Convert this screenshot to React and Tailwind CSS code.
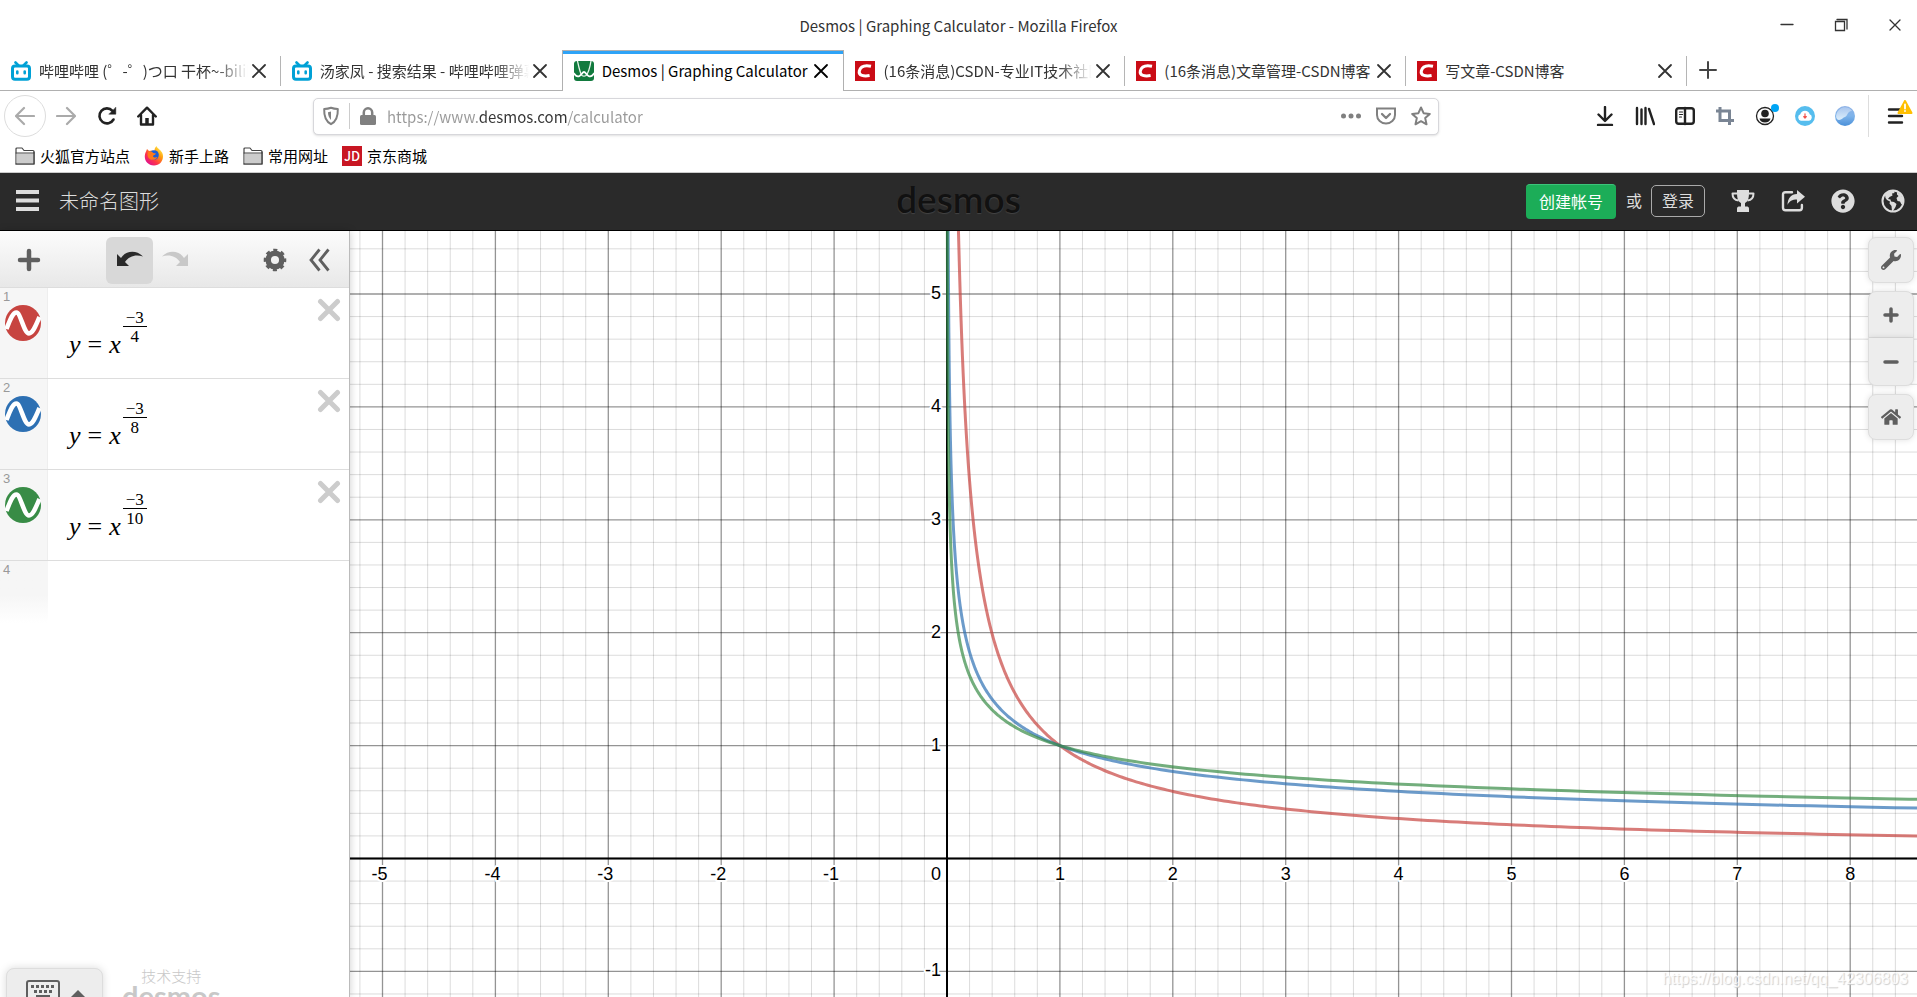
import { useState } from "react";
import { FaWrench, FaHome, FaQuestionCircle } from "react-icons/fa";

const X_PATH = "M4 4l12 12M16 4L4 16";

function Icon({ box = 20, className = "size-5", children, ...rest }) {
  return (
    <svg
      viewBox={`0 0 ${box} ${box}`}
      className={`shrink-0 ${className}`}
      fill="none"
      stroke="currentColor"
      strokeWidth="2"
      strokeLinecap="round"
      strokeLinejoin="round"
      aria-hidden="true"
      {...rest}
    >
      {children}
    </svg>
  );
}

function BiliIcon() {
  return (
    <Icon className="size-5 text-[#00a1d6]">
      <path d="M4.500 1.500l3 3M15.500 1.500l-3 3" strokeWidth="2.600" />
      <rect x="1.500" y="5" width="17" height="13.300" rx="2.500" strokeWidth="3" />
      <path d="M6.300 10.500v1.800M13.700 10.500v1.800" strokeWidth="2.600" />
    </Icon>
  );
}

function CsdnIcon() {
  return (
    <Icon className="size-5">
      <rect width="20" height="20" fill="#ca0c16" stroke="none" />
      <path d="M16 5.300C10 4 5.600 5.400 4.300 10c-1 4.600 4.500 5.600 10.300 4.600" stroke="#fff" strokeWidth="3" strokeLinecap="butt" />
    </Icon>
  );
}

function DesmosIcon() {
  return (
    <Icon className="size-5">
      <rect width="20" height="20" rx="3" fill="#127a3e" stroke="none" />
      <path d="M3.500 0C5 7 6 12.500 8 14.500c1.500 1 2.500 1 4 0C14.500 12 16 6 17 0" stroke="#e8f5ec" strokeWidth="1.300" />
      <path d="M0 12.500c1.500 2.500 3.500 3.500 5.500 2.500s3-4 4.500-4 2.500 3 4.500 4 4 0 5.500-2.500" stroke="#fff" strokeWidth="1.800" />
    </Icon>
  );
}

function FolderIcon() {
  return (
    <Icon className="size-5">
      <path d="M1 18V3q0-1 1-1h5l2 2.500h9q1 0 1 1V18z" fill="#fff" stroke="#444" strokeWidth="1.200" />
      <path d="M1.600 7.500h16.800v10H1.600z" fill="#ccc" stroke="none" />
      <path d="M1 7h18" stroke="#444" strokeWidth="1" />
      <path d="M1 18h18V6" stroke="#444" strokeWidth="1.200" />
    </Icon>
  );
}

function FirefoxIcon() {
  return (
    <Icon className="size-5">
      <defs>
        <linearGradient id="fox" x1="0.9" y1="0.1" x2="0.2" y2="0.9">
          <stop offset="0" stopColor="#fff44f" />
          <stop offset="0.350" stopColor="#ff980e" />
          <stop offset="0.700" stopColor="#ff3647" />
          <stop offset="1" stopColor="#e31587" />
        </linearGradient>
      </defs>
      <path d="M3 3l2 2c2-1 4-.5 5.500 0C10.500 3 11 1.500 12.500 0c.5 2.500 5 4 6.200 8C20.200 14 16 19.500 10 19.500S.5 15 .8 10C1 7 2 6 3 3z" fill="url(#fox)" stroke="none" />
      <circle cx="10" cy="9" r="4.800" fill="#1b5fd9" stroke="none" />
      <path d="M4 6c2-1.500 4.500-.5 5 1l3 .5c-.5 1.500-3 1.500-3 3 1 1.500 3 1 4.500.5-1.500 3.500-7.500 4-9.500 0-.7-2-.5-3.500 0-5z" fill="#ff7a1a" stroke="none" />
    </Icon>
  );
}

const TABS = [
  { title: "哔哩哔哩 (゜-゜)つ口 干杯~-bilibili", icon: BiliIcon, fade: true },
  { title: "汤家凤 - 搜索结果 - 哔哩哔哩弹幕视频网", icon: BiliIcon, fade: true },
  { title: "Desmos | Graphing Calculator", icon: DesmosIcon, active: true },
  { title: "(16条消息)CSDN-专业IT技术社区", icon: CsdnIcon, fade: true },
  { title: "(16条消息)文章管理-CSDN博客", icon: CsdnIcon },
  { title: "写文章-CSDN博客", icon: CsdnIcon },
];

function Tab({ tab, beforeActive }) {
  const TabIcon = tab.icon;
  return (
    <div
      className={`relative flex h-[41px] min-w-0 flex-1 items-center pl-[11px] pr-3 ${
        tab.active
          ? "border-x border-t border-[#b0b0b0] bg-white text-black"
          : "border-b border-[#b0b0b0] pt-px text-[#333]"
      }`}
    >
      {tab.active && <span className="absolute inset-x-0 top-0 h-[3px] bg-[#2ea3f7]" />}
      {!tab.active && !beforeActive && (
        <span className="absolute right-0 top-[6px] h-[30px] w-px bg-[#b5b5b5]" />
      )}
      <TabIcon />
      <span
        className={`ml-2 min-w-0 flex-1 overflow-hidden whitespace-nowrap text-[15px] leading-6 ${
          tab.fade ? "[mask-image:linear-gradient(to_left,transparent,#000_34px)]" : ""
        }`}
      >
        {tab.title}
      </span>
      <button type="button" aria-label="关闭标签页" className="ml-px flex size-5 items-center justify-center">
        <Icon className="size-5" strokeWidth="1.800">
          <path d={X_PATH} />
        </Icon>
      </button>
    </div>
  );
}

function TitleBar() {
  return (
    <div className="relative flex h-[50px] items-center justify-end pr-3 text-[#333]">
      <span className="absolute inset-x-0 top-[14px] text-center text-[15px] leading-6">
        Desmos | Graphing Calculator - Mozilla Firefox
      </span>
      <div className="relative flex gap-[34px]">
        <button type="button" aria-label="最小化">
          <Icon strokeWidth="1.300"><path d="M4 9.500h12" /></Icon>
        </button>
        <button type="button" aria-label="还原">
          <Icon strokeWidth="1.300" strokeLinejoin="miter">
            <path d="M4.500 6.500h9v9h-9zM6 4.500h10V14" />
          </Icon>
        </button>
        <button type="button" aria-label="关闭">
          <Icon strokeWidth="1.300"><path d="M5 5l10 10M15 5L5 15" /></Icon>
        </button>
      </div>
    </div>
  );
}

function NavBar() {
  const [url, setUrl] = useState("https://www.desmos.com/calculator");
  return (
    <div className="flex h-[50px] items-center pl-1 text-[#222]">
      <button type="button" aria-label="后退" className="flex size-[42px] items-center justify-center rounded-full border border-[#ddd] text-[#aaa]">
        <Icon strokeWidth="2.200"><path d="M1 10h18M9 2l-8 8 8 8" /></Icon>
      </button>
      <button type="button" aria-label="前进" className="flex w-10 justify-center text-[#aaa]">
        <Icon strokeWidth="2.200"><path d="M1 10h18M11 2l8 8-8 8" /></Icon>
      </button>
      <button type="button" aria-label="刷新" className="flex w-[42px] justify-center">
        <Icon strokeWidth="2.600">
          <path d="M16.500 13.500A7.500 7.500 0 1 1 15.500 4.800" />
          <path d="M18.800 1.500v6.700h-6.700z" fill="currentColor" strokeWidth="0.500" />
        </Icon>
      </button>
      <button type="button" aria-label="主页" className="flex w-[38px] justify-center">
        <Icon strokeWidth="2.400">
          <path d="M1.200 10.500L10 1.700l8.800 8.800M4 9v9.500h12V9" />
          <path d="M10 18v-6" strokeWidth="3.500" strokeLinecap="butt" />
        </Icon>
      </button>

      <div className="ml-[147px] flex h-[37px] min-w-0 flex-1 items-center rounded-[5px] border border-[#d7d7db] bg-white pl-[7px] pr-[7px] text-[#808080] shadow-sm">
        <Icon>
          <path d="M10 1.800c2.500 1 4.500 1.200 6.800 1.200.3 7-1.800 12.500-6.800 15.200C5 15.500 2.900 10 3.200 3 5.500 3 7.500 2.800 10 1.800z" />
          <path d="M10 5.500v8.500C8 12 7 9.500 7 6.300z" fill="currentColor" stroke="none" />
        </Icon>
        <span className="mx-[8px] h-[26px] w-px bg-[#ccc]" />
        <Icon>
          <rect x="2" y="9" width="16" height="10" rx="1.500" fill="currentColor" stroke="none" />
          <path d="M5.800 10V6.500a4.200 4.200 0 0 1 8.400 0V10" strokeWidth="2.500" />
        </Icon>
        <input
          type="text"
          aria-label="网址"
          value={url}
          onChange={(e) => setUrl(e.target.value)}
          className="ml-[9px] min-w-0 flex-1 bg-[linear-gradient(to_right,#999_91px,#333_91px,#333_181px,#999_181px)] bg-clip-text pt-[2px] text-[15px] leading-6 text-transparent outline-none"
        />
        <div className="flex gap-[15px]">
          <button type="button" aria-label="页面操作">
            <Icon fill="currentColor" stroke="none">
              <circle cx="2.500" cy="10" r="2.500" />
              <circle cx="10" cy="10" r="2.500" />
              <circle cx="17.500" cy="10" r="2.500" />
            </Icon>
          </button>
          <button type="button" aria-label="Pocket">
            <Icon>
              <path d="M1 2.500h18V9a9 8.500 0 0 1-18 0z" strokeLinejoin="miter" />
              <path d="M6 8l4 4 4-4" strokeWidth="2.300" />
            </Icon>
          </button>
          <button type="button" aria-label="收藏">
            <Icon>
              <path d="M10 1.500l2.600 5.700 6.200.7-4.600 4.200 1.300 6.200-5.500-3.100-5.500 3.100 1.300-6.200L1.200 7.900l6.200-.7z" />
            </Icon>
          </button>
        </div>
      </div>

      <div className="ml-[156px] flex gap-5">
        <button type="button" aria-label="下载">
          <Icon strokeWidth="2.400"><path d="M10 1v13M3.500 8.500L10 15l6.500-6.500M3 19h14" /></Icon>
        </button>
        <button type="button" aria-label="书库">
          <Icon strokeWidth="2.400"><path d="M2 2v16M6.500 3.500V18M10.500 2v16M14 3l5 15" /></Icon>
        </button>
        <button type="button" aria-label="侧栏">
          <Icon strokeWidth="2.400">
            <rect x="1.200" y="2.200" width="17.600" height="15.600" rx="2.500" />
            <path d="M10 2v16" />
            <path d="M4.500 6h3M4.500 8.500h3M4.500 11h2" strokeWidth="1.200" />
          </Icon>
        </button>
        <button type="button" aria-label="截图" className="text-[#7a8594]">
          <Icon strokeWidth="3" strokeLinecap="butt" strokeLinejoin="miter">
            <path d="M5 1v13.500h14M1 5h13.500v14" />
          </Icon>
        </button>
        <button type="button" aria-label="账户" className="relative">
          <Icon>
            <circle cx="10" cy="10" r="8.500" strokeWidth="1.300" />
            <circle cx="10" cy="7.500" r="3.800" fill="currentColor" stroke="none" />
            <path d="M4.500 12.500h11c-.5 2.500-2.500 4-5.500 4s-5-1.500-5.500-4z" fill="currentColor" stroke="none" />
          </Icon>
          <span className="absolute -right-1 -top-[2px] size-2 rounded-full bg-[#00a5f5]" />
        </button>
        <button type="button" aria-label="网盘">
          <Icon>
            <circle cx="10" cy="10" r="10" fill="#56bdee" stroke="none" />
            <path d="M6 14.800a3.400 3.400 0 0 1-.7-6.500 4.900 4.900 0 0 1 9.400 0 3.400 3.400 0 0 1-.7 6.500z" fill="#fff" stroke="none" />
            <path d="M10 7.800v2.500M8.700 10.500L10 12l1.300-1.500z" stroke="#f0544c" strokeWidth="1.200" fill="#f0544c" />
          </Icon>
        </button>
        <button type="button" aria-label="扩展">
          <Icon>
            <defs>
              <linearGradient id="ball" x1="0" y1="0" x2="0" y2="1">
                <stop offset="0" stopColor="#8fb2e6" />
                <stop offset="0.500" stopColor="#7fb4ea" />
                <stop offset="1" stopColor="#4a90d9" />
              </linearGradient>
              <linearGradient id="shine" x1="0" y1="0" x2="0" y2="1">
                <stop offset="0" stopColor="#a9c6ee" />
                <stop offset="1" stopColor="#dceefb" />
              </linearGradient>
            </defs>
            <circle cx="10" cy="10" r="10" fill="url(#ball)" stroke="none" />
            <path d="M1.200 9C2.500 3.500 7 1 10.500 1.200 14 1.500 16 3 17 5c-3 0-4 2-5 4s-3 2-4.500 3.500-4.500 2-5.500.5-1-2.500-.8-4z" fill="url(#shine)" stroke="none" />
          </Icon>
        </button>
      </div>
      <span className="ml-[13px] h-[42px] w-px bg-[#ddd]" />
      <button type="button" aria-label="菜单" className="relative ml-[16px] mr-3">
        <Icon strokeWidth="2.400"><path d="M4 3.500h13M4 10h13M4 16.500h13" /></Icon>
        <Icon box={16} className="absolute -right-2 -top-[7px] size-4">
          <path d="M8 2L1.500 14h13z" fill="#ffbf00" stroke="#ffbf00" />
          <path d="M8 5.500v4M8 12v.1" stroke="#fff" strokeWidth="1.800" />
        </Icon>
      </button>
    </div>
  );
}

function BookmarksBar() {
  return (
    <nav className="flex h-8 items-center gap-[14px] border-b border-[#ccc] pb-[2px] pl-[15px] text-[15px] leading-6 text-black">
      <a href="#sites" className="flex items-center gap-[5px]"><FolderIcon />火狐官方站点</a>
      <a href="#start" className="flex items-center gap-[5px]"><FirefoxIcon />新手上路</a>
      <a href="#common" className="flex items-center gap-[5px]"><FolderIcon />常用网址</a>
      <a href="#jd" className="flex items-center gap-[5px]">
        <span className="flex size-5 items-center justify-center bg-[#c81623] text-[13px] font-medium leading-5 text-white">JD</span>
        京东商城
      </a>
    </nav>
  );
}

function Header() {
  return (
    <header className="relative flex h-[58px] shrink-0 items-center border-b border-black bg-[#2a2a2a] pb-px pl-4 pr-3 text-[#ddd]">
      <button type="button" aria-label="打开菜单">
        <Icon box={24} className="size-6" strokeWidth="4" strokeLinecap="butt">
          <path d="M0 3h23M0 11.500h23M0 20h23" />
        </Icon>
      </button>
      <button type="button" className="ml-[19px] pb-px text-xl font-light">未命名图形</button>
      <span className="pointer-events-none absolute inset-x-0 top-0 text-center font-['Lato',sans-serif] text-[37px] font-semibold leading-[52px] text-[#111] [text-shadow:0_1px_1px_#444]">
        desmos
      </span>
      <div className="relative ml-auto flex items-center">
        <button type="button" className="h-[35px] rounded-[4px] border-t border-[#3cc47a] bg-[#1cad58] px-[13px] pb-[2px] text-base text-white">
          创建帐号
        </button>
        <span className="ml-[10px] pb-[2px] text-base">或</span>
        <button type="button" className="ml-[9px] h-8 rounded-[5px] border border-[#aaa] px-[10px] pb-[2px] text-base leading-7">登录</button>
        <div className="ml-[26px] flex gap-[26px]">
          <button type="button" aria-label="奖杯">
            <Icon box={24} className="size-6" strokeLinecap="butt">
              <path d="M6 1h12v3c0 6-1.500 9-4 10v3.500h2.500q1.500.5 1.500 2V23H6v-3.500q0-1.500 1.500-2H10V14C7.500 13 6 10 6 4z" fill="currentColor" stroke="none" />
              <path d="M6 4.500H1.500c0 4 2 6.500 6 7M18 4.500h4.500c0 4-2 6.500-6 7" />
            </Icon>
          </button>
          <button type="button" aria-label="分享">
            <Icon box={24} className="size-6" strokeWidth="2.400">
              <path d="M11 3.200H4.500Q2 3.200 2 5.500v13.300q0 2.400 2.500 2.400h14q2.400 0 2.400-2.400V16" />
              <path d="M16 1l8 6.800-8 6.700v-4c-5 0-7.500 1.500-9.500 5.500C6.800 9 10 5.200 16 5z" fill="currentColor" stroke="none" />
            </Icon>
          </button>
          <button type="button" aria-label="帮助"><FaQuestionCircle className="size-6" /></button>
          <button type="button" aria-label="语言">
            <Icon box={24} className="size-6">
              <circle cx="12" cy="12" r="10.500" strokeWidth="2" />
              <path d="M4 6l4-4 5-.5.500 2.500-2.500.5.500 2-3 1.500-1.500 2 2.500.5.500 2 3 .5 2.500 2-1 3-2.500 4h-1l-.5-5-2-2.500.5-2L6 11 4.500 9z" fill="currentColor" stroke="none" />
              <path d="M16 3l4 3 2 4 .3 3-1.800 2.500-1.500-3-2.500-.5-1-3 2-2-1.500-1.500z" fill="currentColor" stroke="none" />
            </Icon>
          </button>
        </div>
      </div>
    </header>
  );
}

const EXPRESSIONS = [
  { id: 1, den: "4", power: 3 / 4, color: "#c74440" },
  { id: 2, den: "8", power: 3 / 8, color: "#2d70b3" },
  { id: 3, den: "10", power: 3 / 10, color: "#388c46" },
];

function Expression({ item }) {
  return (
    <li className="flex h-[91px] border-b border-[#ddd]">
      <div className="w-12 shrink-0 border-r border-[#eee] bg-[#f6f6f6]">
        <span className="block pl-[3px] pt-px font-['Liberation_Sans',sans-serif] text-[13px] leading-4 text-[#999]">{item.id}</span>
        <button type="button" aria-label={`隐藏表达式 ${item.id}`} className="ml-[5px] block">
          <Icon box={36} className="size-9">
            <circle cx="18" cy="18" r="18" fill={item.color} stroke="none" />
            <path d="M1.500 24C5 15 7.500 7.500 11.500 7.500S19 28.500 24 28.500C28 28.500 31 20 34.500 12" stroke="#fff" strokeWidth="4.500" strokeLinecap="butt" />
          </Icon>
        </button>
      </div>
      <div className="flex flex-1 items-start pl-[21px] font-['Liberation_Serif',serif] text-black">
        <span className="mt-[43px] whitespace-pre text-[26px] leading-7">
          <i>y</i>
          <span className="px-[7px]">=</span>
          <i>x</i>
        </span>
        <span className="ml-[2px] mt-[21px] flex w-6 flex-col text-center text-[17px]">
          <span className="border-b border-black leading-[17px]">−3</span>
          <span className="leading-5">{item.den}</span>
        </span>
      </div>
      <button type="button" aria-label={`删除表达式 ${item.id}`} className="mr-2 mt-[10px] size-6 text-[#ccc]">
        <Icon box={24} className="size-6" strokeWidth="5">
          <path d="M3.500 3.500l17 17M20.500 3.500l-17 17" />
        </Icon>
      </button>
    </li>
  );
}

function Sidebar() {
  return (
    <aside className="relative z-10 flex w-[350px] shrink-0 flex-col border-r border-[#bbb] bg-white shadow-[0_0_8px_rgba(0,0,0,0.2)]">
      <div className="flex h-[57px] shrink-0 items-center border-b border-[#ddd] bg-linear-to-b from-[#fcfcfc] to-[#e8e8e8] pl-[17px] pr-[18px] pt-[2px] text-[#5f5f5f]">
        <button type="button" aria-label="添加项目">
          <Icon box={24} className="size-6" strokeWidth="4.500"><path d="M12 3v18M3 12h18" /></Icon>
        </button>
        <button type="button" aria-label="撤销" className="ml-[65px] flex size-[47px] items-center justify-center rounded-md bg-[#d8d8d8] text-[#2a2a2a]">
          <Icon box={26} className="size-[26px]" fill="currentColor" stroke="none">
            <path d="M0 7v12h12l-4-4c4-6 11-8 18-5.500C20 3 9 3 4 11z" />
          </Icon>
        </button>
        <button type="button" aria-label="重做" disabled className="ml-[9px] text-[#c8c8c8]">
          <Icon box={26} className="size-[26px]" fill="currentColor" stroke="none">
            <path d="M26 7v12H14l4-4C14 9 7 7 0 9.500 6 3 17 3 22 11z" />
          </Icon>
        </button>
        <button type="button" aria-label="编辑列表" className="ml-auto">
          <Icon box={24} className="size-6">
            <circle cx="12" cy="12" r="6.800" strokeWidth="5.500" />
            <circle cx="12" cy="12" r="9.800" strokeWidth="3" strokeDasharray="4 3.697" strokeDashoffset="2" strokeLinecap="butt" />
          </Icon>
        </button>
        <button type="button" aria-label="隐藏列表" className="ml-5">
          <Icon box={24} className="size-6" strokeWidth="2.800" strokeLinecap="butt" strokeLinejoin="miter">
            <path d="M12.500 1.500L4 12l8.500 10.500M21.500 1.500L13 12l8.500 10.500" />
          </Icon>
        </button>
      </div>
      <ol>
        {EXPRESSIONS.map((item) => (
          <Expression key={item.id} item={item} />
        ))}
      </ol>
      <div className="min-h-0 flex-1">
        <div className="h-[62px] w-12 bg-linear-to-b from-[#f6f6f6] from-55% to-white pl-[3px] pt-px font-['Liberation_Sans',sans-serif] text-[13px] leading-4 text-[#999]">
          4
        </div>
      </div>
      <div className="flex h-[29px] shrink-0 items-start pl-[6px]">
        <button type="button" aria-label="显示键盘" className="flex h-12 w-[97px] shrink-0 items-start rounded-lg border border-[#ddd] bg-[#ededed] pl-[19px] pt-[11px] text-[#5f5f5f] shadow-[0_0_8px_rgba(0,0,0,0.15)]">
          <svg viewBox="0 0 34 24" className="h-6 w-[34px]" fill="none" stroke="currentColor" strokeWidth="2">
            <rect x="1" y="1" width="32" height="22" rx="2" />
            <path d="M5 6.500h24M8 11.500h19" strokeWidth="3" strokeDasharray="3 2" />
            <path d="M10 16.500h14" strokeWidth="3" />
          </svg>
          <svg viewBox="0 0 16 8" className="ml-[10px] mt-[10px] h-2 w-4" fill="currentColor">
            <path d="M8 0l8 8H0z" />
          </svg>
        </button>
        <div className="ml-[19px] text-center text-[#c8c8c8]">
          <p className="text-[15px] font-light leading-[15px]">技术支持</p>
          <p className="font-['Lato',sans-serif] text-[29px] font-bold leading-[26px]">desmos</p>
        </div>
      </div>
    </aside>
  );
}

// graph paper geometry, in px inside the 1567x766 view
const OX = 597;
const OY = 627.5;
const UNIT = 112.9;

function curve(power) {
  const points = [];
  const from = Math.log(Math.pow(6, -1 / power));
  const to = Math.log(9);
  for (let i = 0; i <= 300; i++) {
    const x = Math.exp(from + ((to - from) * i) / 300);
    const y = Math.pow(x, -power);
    points.push(`${(OX + x * UNIT).toFixed(2)},${(OY - y * UNIT).toFixed(2)}`);
  }
  return points.join(" ");
}

function range(a, b) {
  return Array.from({ length: b - a + 1 }, (_, i) => a + i);
}

function Graph() {
  return (
    <svg
      viewBox="0 0 1567 766"
      preserveAspectRatio="xMidYMid slice"
      className="absolute inset-0 size-full"
      role="img"
      aria-label="函数图像"
    >
      <rect width="1567" height="766" fill="#fff" />
      {range(-27, 43).map((i) => (
        <line key={i} x1={OX + (i * UNIT) / 5} x2={OX + (i * UNIT) / 5} y1="0" y2="766" stroke="#000" strokeOpacity={i % 5 ? 0.14 : 0.42} strokeWidth={i % 5 ? 1 : 1.3} />
      ))}
      {range(-6, 28).map((i) => (
        <line key={i} y1={OY - (i * UNIT) / 5} y2={OY - (i * UNIT) / 5} x1="0" x2="1567" stroke="#000" strokeOpacity={i % 5 ? 0.14 : 0.42} strokeWidth={i % 5 ? 1 : 1.3} />
      ))}
      <path d={`M${OX} 0V766M0 ${OY}H1567`} stroke="#000" strokeWidth="2" />
      <g className="font-['Liberation_Sans',sans-serif] text-lg" fill="#000" stroke="#fff" strokeWidth="4" strokeLinejoin="round" paintOrder="stroke">
        {range(-5, 8).filter((n) => n !== 0).map((n) => (
          <text key={n} x={OX + n * UNIT - (n < 0 ? 3 : 0)} y={OY + 21} textAnchor="middle">{n}</text>
        ))}
        {range(-1, 5).map((n) => (
          <text key={n} x={OX - 6} y={n === 0 ? OY + 21 : OY - n * UNIT + 5} textAnchor="end">{n}</text>
        ))}
      </g>
      {EXPRESSIONS.map((item) => (
        <polyline key={item.id} points={curve(item.power)} fill="none" stroke={item.color} strokeWidth="3" strokeOpacity="0.7" strokeLinejoin="round" />
      ))}
    </svg>
  );
}

const PAD_BUTTON = "flex w-[46px] items-center justify-center border border-[#ddd] bg-[#ededed] text-[#5f5f5f] shadow-[0_0_6px_rgba(0,0,0,0.12)]";

function GraphControls() {
  return (
    <div className="absolute right-[3px] top-[6px] flex flex-col">
      <button type="button" aria-label="图形设置" className={`${PAD_BUTTON} h-[46px] rounded-lg`}>
        <FaWrench className="size-5" />
      </button>
      <button type="button" aria-label="放大" className={`${PAD_BUTTON} mt-2 h-[47px] rounded-t-lg`}>
        <Icon strokeWidth="3.500"><path d="M10 4v12M4 10h12" /></Icon>
      </button>
      <button type="button" aria-label="缩小" className={`${PAD_BUTTON} h-[48px] rounded-b-lg border-t-0`}>
        <Icon strokeWidth="3.500"><path d="M4 10h12" /></Icon>
      </button>
      <button type="button" aria-label="默认视图" className={`${PAD_BUTTON} mt-2 h-[46px] rounded-lg pb-px`}>
        <FaHome className="size-5" />
      </button>
    </div>
  );
}

export default function App() {
  return (
    <div className="flex h-screen flex-col overflow-hidden bg-white font-['Noto_Sans_CJK_SC',sans-serif]">
      <TitleBar />
      <div className="flex h-[41px] shrink-0">
        {TABS.map((tab, i) => (
          <Tab key={tab.title} tab={tab} beforeActive={Boolean(TABS[i + 1]?.active)} />
        ))}
        <div className="h-[41px] w-[230px] border-b border-[#b0b0b0] pl-[11px] pt-[10px] text-[#444]">
          <button type="button" aria-label="新建标签页" className="block">
            <Icon><path d="M10 2v16M2 10h16" /></Icon>
          </button>
        </div>
      </div>
      <NavBar />
      <BookmarksBar />
      <Header />
      <main className="flex min-h-0 flex-1">
        <Sidebar />
        <section className="relative min-w-0 flex-1 overflow-hidden">
          <Graph />
          <GraphControls />
          <span className="absolute bottom-[6px] right-[9px] font-['Liberation_Sans',sans-serif] text-base text-white/80 [text-shadow:1px_1px_1px_#ccc]">
            https://blog.csdn.net/qq_42306803
          </span>
        </section>
      </main>
    </div>
  );
}
